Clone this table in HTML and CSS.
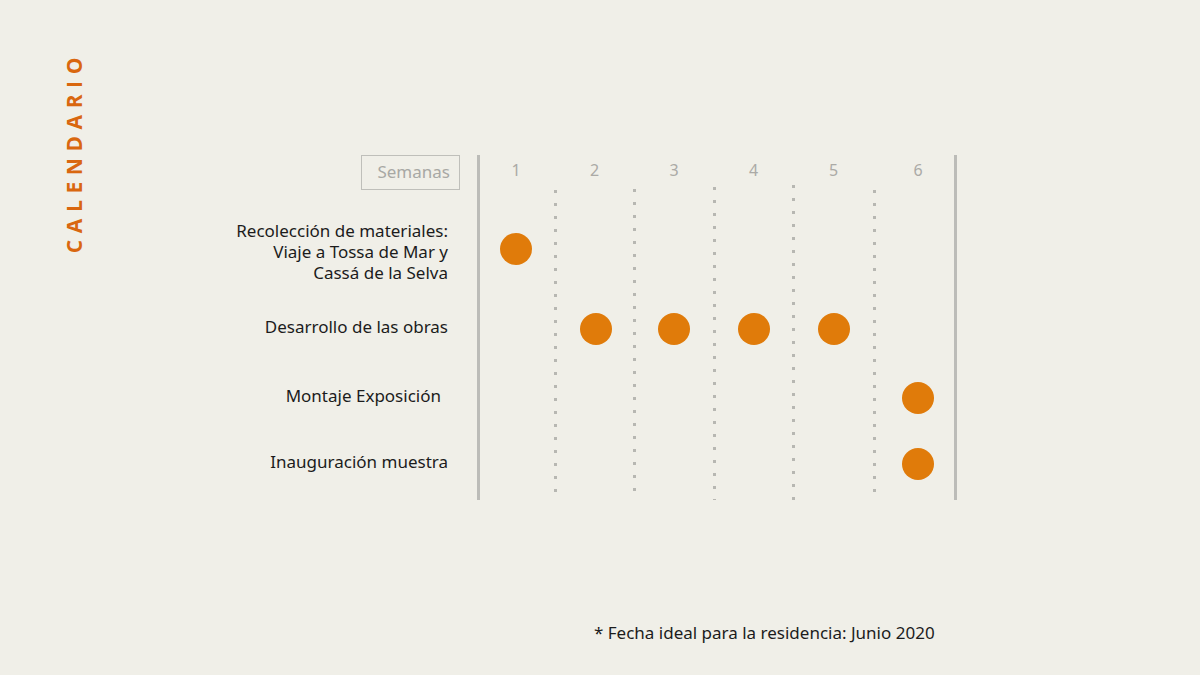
FILE: index.html
```html
<!DOCTYPE html>
<html lang="es">
<head>
<meta charset="utf-8">
<title>Calendario</title>
<link rel="stylesheet" href="styles.css">
</head>
<body>
<div class="page">
  <div class="title">CALENDARIO</div>
  <div class="chart">
    <div class="head-label"><span class="weeks-box">Semanas</span></div>
    <div class="frame"></div>
    <div class="num c1">1</div>
    <div class="num c2">2</div>
    <div class="num c3">3</div>
    <div class="num c4">4</div>
    <div class="num c5">5</div>
    <div class="num c6">6</div>

    <div class="divider c2"></div>
    <div class="divider c3 up1"></div>
    <div class="divider c4 up2"></div>
    <div class="divider c5 up3"></div>
    <div class="divider c6"></div>

    <div class="label r1">Recolección de materiales:<br>Viaje a Tossa de Mar y<br>Cassá de la Selva</div>
    <div class="label r2">Desarrollo de las obras</div>
    <div class="label r3 trail">Montaje Exposición</div>
    <div class="label r4">Inauguración muestra</div>

    <div class="dot r1 c1"></div>
    <div class="dot r2 c2"></div>
    <div class="dot r2 c3"></div>
    <div class="dot r2 c4"></div>
    <div class="dot r2 c5"></div>
    <div class="dot r3 c6"></div>
    <div class="dot r4 c6"></div>
  </div>
</div>
<p class="note">* Fecha ideal para la residencia: Junio 2020</p>
</body>
</html>
```

FILE: styles.css
```css
* { box-sizing: border-box; }

html, body {
  margin: 0;
  padding: 0;
}

body {
  width: 1200px;
  height: 675px;
  overflow: hidden;
  background: #f0efe8;
  font-family: "Noto Sans", "Open Sans", sans-serif;
  color: #1c1c1c;
}

.page {
  display: flex;
  align-items: flex-start;
  padding: 51px 0 0 64px;
}

.title {
  writing-mode: vertical-rl;
  transform: rotate(180deg);
  width: 20px;
  line-height: 20px;
  font-family: "Open Sans", sans-serif;
  font-weight: 700;
  font-size: 21px;
  letter-spacing: 6.6px;
  color: #d9670f;
}

.chart {
  margin: 104px 0 0 136px;
  display: grid;
  grid-template-columns: 240px 17px 78px 79px 80px 79px 81px 83px;
  grid-template-rows: 34px 19px 82px 78px 60px 72px;
}

.head-label {
  grid-column: 1;
  grid-row: 1;
  display: flex;
  justify-content: flex-end;
}

.weeks-box {
  width: 99px;
  height: 35px;
  border: 1.5px solid #bfbfba;
  color: #a8a8a4;
  font-size: 17px;
  display: flex;
  align-items: center;
  justify-content: flex-end;
  padding-right: 9px;
  padding-bottom: 2px;
}

.frame {
  grid-column: 3 / 9;
  grid-row: 1 / -1;
  border-left: 3px solid #bcbcb8;
  border-right: 3px solid #bcbcb8;
}

.num {
  grid-row: 1;
  align-self: center;
  text-align: center;
  color: #abaaa6;
  font-size: 16px;
  padding-bottom: 5px;
}

.c1 { grid-column: 3; }
.c2 { grid-column: 4; }
.c3 { grid-column: 5; }
.c4 { grid-column: 6; }
.c5 { grid-column: 7; }
.c6 { grid-column: 8; }

.num.c6, .dot.c6 { margin-left: 5px; }
.dot.c2 { margin-left: 3px; }

.divider {
  grid-row: 2 / -1;
  margin-left: -1px;
  margin-top: 1px;
  background: repeating-linear-gradient(to bottom, #b7b7b2 0 3px, transparent 3px 13px) left top / 3px 100% no-repeat;
}
.divider.up1 { margin-top: 0; }
.divider.up2 { margin-top: -2px; }
.divider.up3 { margin-top: -4px; }

.label {
  grid-column: 1;
  align-self: center;
  text-align: right;
  padding-right: 12px;
  padding-bottom: 5px;
  font-size: 17px;
  line-height: 21px;
}
.label.r1 { padding-bottom: 0; padding-top: 4px; }
.label.trail { padding-right: 19px; }

.r1 { grid-row: 3; }
.r2 { grid-row: 4; }
.r3 { grid-row: 5; }
.r4 { grid-row: 6; }

.dot {
  width: 32px;
  height: 32px;
  border-radius: 50%;
  background: #e07b0a;
  justify-self: center;
  align-self: center;
}

.note {
  margin: 123px 0 0 594px;
  font-size: 17px;
  line-height: 20px;
}
```
